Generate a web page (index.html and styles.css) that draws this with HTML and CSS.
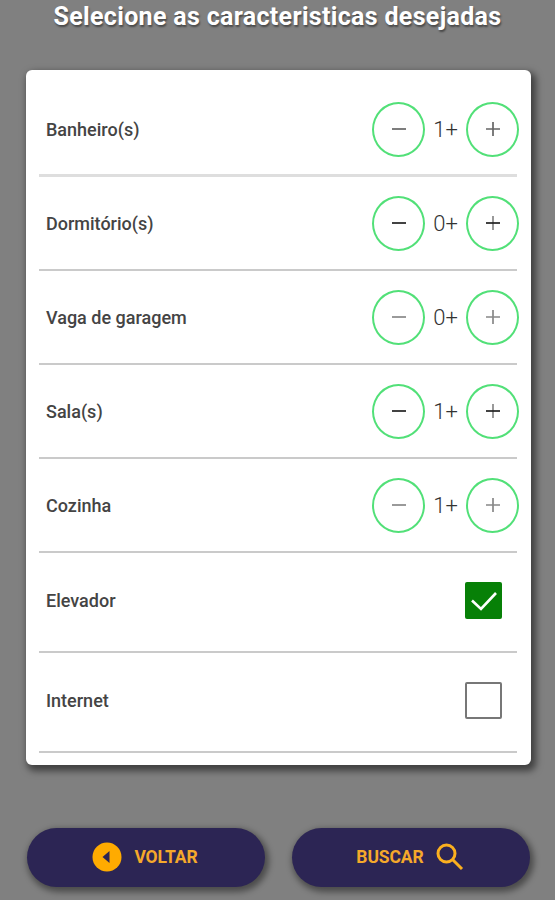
FILE: index.html
```
<!DOCTYPE html>
<html lang="pt-BR">
<head>
    <meta charset="UTF-8">
    <meta name="viewport" content="width=device-width, initial-scale=1.0">
    <title>Busca</title>
    <link rel="stylesheet" href="styles.css">
</head>
<body>
    <h1>Selecione as caracteristicas desejadas</h1>

    <div class="card">
        <div class="row thick">
            <span class="label">Banheiro(s)</span>
            <div class="counter">
                <button class="round soft"><svg viewBox="0 0 14 14"><path d="M0 7h14"/></svg></button>
                <span class="count">1+</span>
                <button class="round soft"><svg viewBox="0 0 14 14"><path d="M0 7h14M7 0v14"/></svg></button>
            </div>
        </div>
        <div class="row">
            <span class="label">Dormitório(s)</span>
            <div class="counter">
                <button class="round"><svg viewBox="0 0 14 14"><path d="M0 7h14"/></svg></button>
                <span class="count">0+</span>
                <button class="round"><svg viewBox="0 0 14 14"><path class="thin" d="M7 0v14"/><path d="M0 7h14"/></svg></button>
            </div>
        </div>
        <div class="row">
            <span class="label">Vaga de garagem</span>
            <div class="counter">
                <button class="round pale"><svg viewBox="0 0 14 14"><path d="M0 7h14"/></svg></button>
                <span class="count">0+</span>
                <button class="round pale"><svg viewBox="0 0 14 14"><path d="M0 7h14M7 0v14"/></svg></button>
            </div>
        </div>
        <div class="row">
            <span class="label">Sala(s)</span>
            <div class="counter">
                <button class="round"><svg viewBox="0 0 14 14"><path d="M0 7h14"/></svg></button>
                <span class="count">1+</span>
                <button class="round"><svg viewBox="0 0 14 14"><path class="thin" d="M7 0v14"/><path d="M0 7h14"/></svg></button>
            </div>
        </div>
        <div class="row">
            <span class="label">Cozinha</span>
            <div class="counter">
                <button class="round pale"><svg viewBox="0 0 14 14"><path d="M0 7h14"/></svg></button>
                <span class="count">1+</span>
                <button class="round pale"><svg viewBox="0 0 14 14"><path d="M0 7h14M7 0v14"/></svg></button>
            </div>
        </div>
        <div class="row tall">
            <span class="label">Elevador</span>
            <span class="check checked"><svg viewBox="0 0 37 37"><path d="M7 18.500l9 8.500L31 11"/></svg></span>
        </div>
        <div class="row tall">
            <span class="label">Internet</span>
            <span class="check"></span>
        </div>
    </div>

    <div class="actions">
        <button class="btn">
            <svg class="back" viewBox="0 0 30 30"><circle cx="15" cy="15" r="14.500"/><path d="M17.500 9v12L10.500 15z"/></svg>
            VOLTAR
        </button>
        <button class="btn">
            BUSCAR
            <svg class="search" viewBox="0 0 28 28"><circle cx="10.500" cy="10.500" r="8.500"/><path d="M16.500 16.500l9.500 9.500"/></svg>
        </button>
    </div>
</body>
</html>
```
FILE: styles.css
```
* {
    box-sizing: border-box;
}
body {
    margin: 0;
    height: 900px;
    overflow: hidden;
    background: #808080;
    font-family: Roboto, sans-serif;
}
h1 {
    margin: 0;
    padding-top: 2px;
    height: 70px;
    font-size: 25px;
    line-height: 30px;
    font-weight: 700;
    letter-spacing: 0.32px;
    color: #fff;
    text-align: center;
    white-space: nowrap;
    text-shadow: 1px 2px 2px rgba(0, 0, 0, 0.45);
}
.card {
    width: 505px;
    height: 695px;
    margin: 0 0 0 26px;
    padding: 12px 14px 0 13px;
    background: #fff;
    border-radius: 6px;
    box-shadow: 3px 4px 7px 2px rgba(0, 0, 0, 0.5);
}
.row {
    display: flex;
    align-items: center;
    justify-content: space-between;
    height: 94px;
    padding-left: 7px;
    border-bottom: 2px solid #cacaca;
}
.row.thick {
    height: 95px;
    padding-top: 2px;
    border-bottom: 3px solid #dedede;
}
.row.tall {
    height: 100px;
    padding-right: 15px;
    padding-bottom: 4px;
}
.label {
    font-size: 18px;
    font-weight: 500;
    color: #444;
}
.counter {
    display: flex;
    align-items: center;
    margin-right: -2px;
}
.round {
    display: flex;
    align-items: center;
    justify-content: center;
    width: 53px;
    height: 55px;
    padding: 0;
    background: #fff;
    border: 2px solid #52e078;
    border-radius: 50%;
}
.round svg {
    width: 14px;
    height: 14px;
    fill: none;
    stroke: #222;
    stroke-width: 1.7;
}
.round .thin {
    stroke: #888;
}
.round.soft svg {
    stroke: #666;
}
.round.pale svg {
    stroke: #888;
}
.count {
    width: 41px;
    font-size: 22px;
    font-weight: 300;
    text-align: center;
    color: #333;
}
.check {
    width: 37px;
    height: 37px;
    border: 2px solid #777;
    border-radius: 2px;
}
.check.checked {
    border: none;
    background: #078007;
}
.check svg {
    display: block;
    fill: none;
    stroke: #fff;
    stroke-width: 2.6;
}
.actions {
    display: flex;
    gap: 27px;
    margin: 63px 25px 0 27px;
}
.btn {
    display: flex;
    align-items: center;
    justify-content: center;
    gap: 12px;
    width: 238px;
    height: 59px;
    padding: 0 2px 2px 0;
    border: none;
    border-radius: 30px;
    background: #2c2554;
    color: #f5a92b;
    font-family: Roboto, sans-serif;
    font-size: 17.5px;
    font-weight: 700;
    letter-spacing: -0.1px;
    box-shadow: 2px 3px 6px 2px rgba(0, 0, 0, 0.42);
}
.back {
    width: 30px;
    height: 30px;
    fill: #ffab00;
}
.back path {
    fill: #2c2554;
}
.search {
    width: 28px;
    height: 28px;
    fill: none;
    stroke: #fbb01f;
    stroke-width: 3;
}
```
